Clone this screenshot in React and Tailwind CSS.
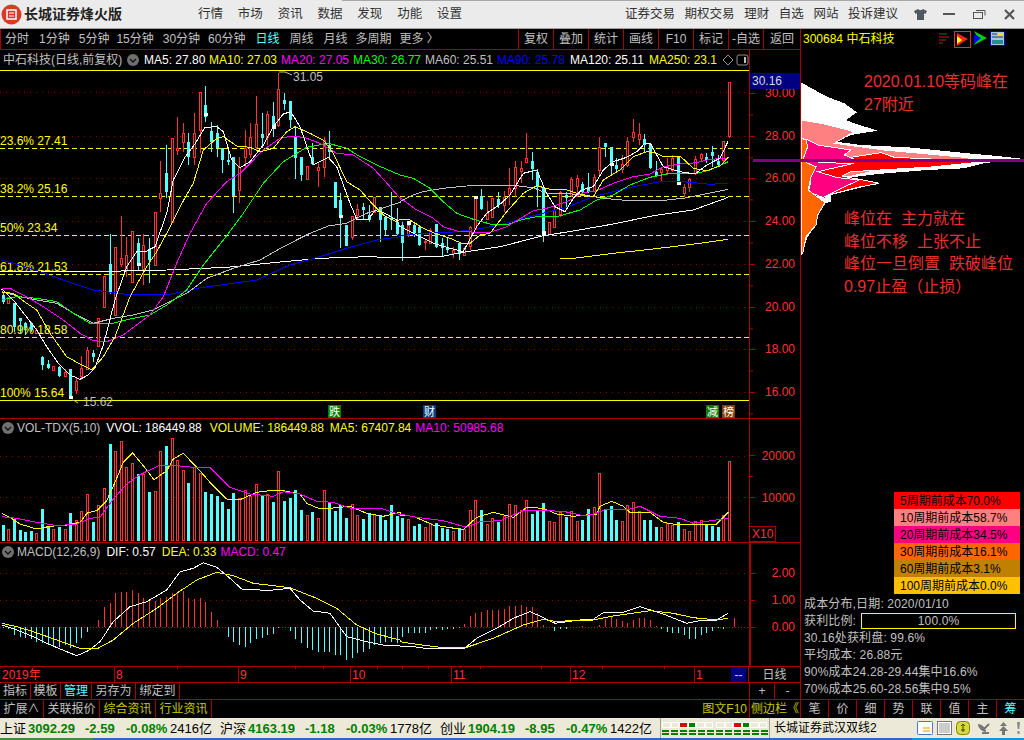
import React from 'react';

const RED = '#ff3232';
const CYAN = '#54ffff';
const stepX = (i) => Math.round((8 + 16.886 * i) / 3);

// all chart numbers are read off 3x crops, so they stay in that scale here
const toPts = (left, right, dy = 0) => {
  const out = [];
  for (let i = 0; i < left.length; i += 2) out.push(`${(left[i] / 3).toFixed(1)},${(left[i + 1] / 3 + dy).toFixed(1)}`);
  for (let i = 0; i < right.length; i += 2) out.push(`${((right[i] + 1200) / 3).toFixed(1)},${(right[i + 1] / 3 + dy).toFixed(1)}`);
  return out.join(' ');
};

// [kind, bodyTop, bodyBottom, high, low]
const candles = [
  ['c',675,695,670,703],['r',680,697,680,697],['c',698,770,698,785],['c',745,755,745,790],['c',760,775,755,795],['c',760,780,755,785],['r',780,790,775,792],
  ['c',862,885,858,900],['c',882,893,870,897],['r',888,899,888,899],['c',890,918,888,920],['r',905,917,898,920],['c',897,985,897,985],['r',932,960,925,972],
  ['r',895,920,858,930],['r',840,897,830,900],['c',850,862,840,875],['r',745,830,745,830],['r',618,712,618,712],['c',583,668,492,672],['r',532,735,532,735],
  ['r',565,582,438,590],['r',555,600,500,620],['r',484,637,484,637],['c',520,590,505,600],['r',525,597,492,645],['c',540,570,505,640],['r',427,585,427,585],
  ['r',370,385,273,425],['c',310,368,225,385],['r',205,458,205,458],['r',235,240,142,255],['r',190,217,158,245],['c',215,260,190,285],['r',190,262,130,285],
  ['r',67,180,67,250],['c',105,140,48,155],['c',183,217,155,245],['c',188,232,165,262],['c',235,272,235,310],['c',270,275,235,285],['c',262,378,262,430],
  ['r',290,360,262,400],['r',235,262,180,295],['r',200,250,158,265],['r',162,232,78,240],['c',192,205,130,235],['r',132,200,122,225],['c',138,178,95,200],
  ['r',58,165,8,170],['c',90,102,68,120],['c',93,150,93,175],['c',198,265,170,328],['c',260,315,260,333],['r',288,326,288,326],['c',262,282,220,285],
  ['r',290,300,275,350],['r',210,290,200,322],['c',225,245,182,270],['c',335,413,335,413],['c',390,445,370,535],['c',465,527,465,527],['r',438,502,438,510],
  ['r',418,435,403,450],['c',410,420,400,450],['c',435,450,405,455],['r',380,425,380,430],['c',412,450,410,515],['c',440,480,440,495],['c',445,452,367,480],
  ['c',455,490,415,495],
  ['c',465,520,455,572],['r',465,495,453,500],['c',465,495,460,500],['c',472,525,472,528],['r',512,516,510,540],['r',480,518,475,520],['c',462,532,462,535],
  ['c',518,532,505,560],['c',530,540,505,548],['r',540,548,530,565],['c',520,552,518,570],['r',535,556,530,558],['r',472,530,468,540],['r',380,475,378,478],
  ['c',378,418,358,420],['r',428,445,392,450],['r',385,443,385,445],['c',388,405,365,415],['r',380,403,362,425],['r',353,370,293,405],['r',292,355,272,380],
  ['r',295,303,272,340],['r',265,276,188,278],['c',273,298,245,330],['c',305,350,298,412],['c',350,495,350,515],['r',457,492,457,495],['r',420,470,405,472],
  ['r',365,430,362,440],['c',375,385,365,420],['r',327,375,320,380],['r',325,350,315,380],['c',342,365,335,368],['c',350,365,310,368],['r',320,362,312,365],
  ['r',232,302,200,320],['c',220,232,220,260],['c',232,290,232,315],['c',285,298,265,310],['r',282,298,255,310],['r',212,285,202,290],['r',186,200,148,215],
  ['r',192,207,160,225],['c',208,225,192,245],['c',222,295,218,298],['c',305,318,272,320],['r',298,308,290,335],['r',288,300,265,315],['r',265,302,255,305],
  ['c',258,335,258,345],['r',350,368,342,380],['r',328,352,325,365],['r',268,310,258,315],['r',252,264,250,272],['c',262,270,248,280],['c',245,258,228,290],
  ['c',272,285,255,290],['r',212,268,212,280],['r',37,200,37,205],
];
// the small white doji caps
const whiteCaps = [[12,978,985],[24,580,590],[36,130,140],[48,165,178],[60,435,445],[72,453,465],[84,378,388],[96,483,495],[108,280,290],[120,335,345]];

const ma5 = [[5,657,40,690,75,735,110,780,140,830,175,880,210,915,240,928,265,915,285,893,310,825,345,690,380,590,410,545,440,543,465,530,500,430,520,330,555,262,585,222,615,172,650,170,670,185,695,270,720,293,750,275,790,225,820,170,850,132,872,125,900,170,940,285,985,262,1010,290,1050,400,1070,447,1105,447,1125,422,1145,425,1190,450],
  [0,470,40,490,100,520,150,535,190,545,230,470,260,430,300,403,330,375,370,310,410,300,440,370,465,410,495,425,520,385,545,360,580,350,610,300,640,275,680,262,710,245,735,220,752,222,790,290,840,305,885,312,920,285,960,265,985,212]];
const ma10 = [[5,667,40,670,80,700,110,720,150,790,200,860,245,885,275,900,310,860,345,800,390,680,440,590,470,545,500,490,540,410,580,340,610,240,650,205,670,200,710,228,750,232,780,245,820,235,860,185,885,170,930,190,970,210,1000,250,1040,335,1080,360,1120,405,1150,435,1190,455],
  [0,448,30,450,70,475,110,492,150,505,190,522,210,520,240,495,270,490,320,425,370,370,410,347,450,358,500,360,530,370,580,380,610,330,660,300,700,260,740,245,770,250,790,260,840,258,880,295,920,302,960,288,985,262]];
const ma20 = [[5,655,30,655,80,680,130,710,190,750,240,790,280,812,320,815,370,795,450,735,490,680,530,580,570,490,620,400,680,335,720,310,790,240,840,205,880,198,915,203,960,220,1010,250,1060,255,1120,295,1170,350,1200,385],
  [0,383,50,420,100,445,130,470,170,483,230,487,270,487,320,470,370,440,400,422,440,415,500,395,550,368,590,362,640,340,700,320,750,312,790,290,840,282,890,278,930,268,985,265]];
const ma30 = [[5,690,50,680,110,685,170,695,220,730,270,760,330,762,400,745,450,735,500,705,560,660,610,585,670,510,730,430,790,340,850,275,920,232,985,220,1040,235,1080,260,1130,285,1200,315],
  [0,315,40,325,90,355,130,395,170,430,220,448,270,462,320,465,370,448,410,440,470,440,540,420,590,390,640,375,690,345,750,322,810,310,880,312,930,300,985,275]];
const ma60 = [[5,665,60,680,110,690,170,700,230,735,280,760,340,745,400,735,460,720,510,695,560,670,620,625,700,595,780,570,850,530,930,490,985,468,1040,460,1100,430,1200,397],
  [0,395,40,375,70,365,130,355,230,345,330,345,400,353,440,370,500,370,580,380,640,388,700,393,780,392,850,385,900,375,985,358]];
const ma90 = [[5,570,60,585,120,605,190,630,280,660,380,673,510,673,590,655,700,640,770,630,870,585,960,560,1040,535,1130,510,1200,500],
  [0,498,60,490,150,487,230,478,300,465,370,445,430,430,500,412,580,380,640,365,700,350,780,335,850,335,930,343,985,340]];
const ma120 = [[0,603,260,603,270,605,500,600,680,592,850,575,960,565,1100,560,1200,563],
  [0,562,120,560,200,545,300,530,430,497,520,483,640,462,760,437,880,420,985,382]];
const ma250 = [[], [480,565,520,565,640,550,760,537,900,520,985,508]];

const volBars = [
  348,360,330,363,370,366,372,300,350,360,355,360,312,333,305,255,338,288,237,105,125,97,175,163,195,195,248,245,125,110,87,153,183,222,175,192,248,255,260,278,300,252,268,243,260,225,262,255,278,185,275,268,242,302,318,308,327,243,282,305,287,327,285,318,330,315,315,318,332,288,320,
  327,330,350,345,355,343,342,357,360,365,358,360,303,273,303,345,327,338,322,285,288,303,273,315,302,282,337,340,308,323,307,335,333,300,295,192,303,292,333,337,288,280,306,333,333,354,355,342,348,340,360,367,337,334,348,350,354,318,157,
];
const volMa5 = [[5,313,30,325,60,345,110,360,150,352,200,348,240,340,262,312,290,305,320,275,345,220,370,160,398,132,430,170,462,212,500,185,520,150,550,133,590,175,630,220,680,270,720,272,770,250,810,245,840,243,900,255,920,283,960,300,1000,297,1050,292,1100,313,1150,322,1200,310],
  [0,318,40,322,100,348,190,362,230,325,280,310,340,325,380,295,430,298,470,315,520,322,590,315,600,292,635,277,670,292,690,310,750,310,790,340,830,347,900,348,950,345,985,310]];
const volMa10 = [[5,323,50,328,110,340,170,350,230,345,270,328,300,325,340,270,380,225,420,197,480,168,530,170,580,175,630,175,690,235,750,255,820,262,850,248,900,255,950,277,1000,280,1050,297,1150,300,1200,317],
  [0,315,50,325,130,335,200,355,240,338,300,335,370,305,440,305,490,307,550,320,580,316,620,300,680,303,720,292,780,322,840,328,880,343,985,328]];

const macdBars = [
  655,658,675,680,685,688,695,700,705,708,710,705,715,700,685,665,652,630,592,578,548,545,545,540,548,563,570,572,565,562,550,545,542,565,568,565,575,605,630,652,680,695,705,710,698,688,685,675,672,655,652,662,688,700,715,720,725,725,725,735,735,750,745,730,725,718,705,700,695,695,700,
  682,670,668,670,668,660,658,660,657,658,655,642,618,609,606,600,600,600,598,588,588,585,590,592,608,645,652,662,658,656,652,650,648,650,652,645,628,622,628,633,640,630,624,625,630,648,658,665,668,670,675,688,688,675,668,662,655,658,652,625,
];
const dif = [[5,645,50,660,100,680,140,700,200,725,230,737,265,722,300,695,340,635,390,590,440,575,500,540,540,485,580,475,610,458,650,472,690,505,725,537,780,540,820,540,870,535,900,570,940,603,990,610,1040,680,1100,695,1150,705,1200,708],
  [0,708,40,710,70,714,195,714,230,685,290,655,340,625,390,605,420,618,465,640,540,630,580,628,610,608,670,607,720,590,790,612,860,640,910,630,950,630,985,610]];
const dea = [[5,640,50,650,100,665,170,690,240,715,290,717,340,690,400,640,470,595,530,550,590,510,650,487,700,497,760,520,870,533,950,565,1010,595,1070,645,1130,672,1200,690],
  [0,695,50,703,130,713,200,712,280,685,370,645,430,628,470,635,530,630,580,630,640,618,750,602,820,610,880,623,950,630,985,625]];

const chipWhite = [150,37,200,65,240,85,280,100,318,127,285,150,310,160,380,182,300,195,255,215,330,225,470,232,650,250,740,258,820,267,760,272,700,280,640,295,530,300,380,312,280,325,325,328,385,340,320,355,240,375,240,395,220,400,200,440,195,465,170,500,160,530,150,556];
const chipPink = [150,150,210,160,310,185,250,220,400,240,640,262,700,272,640,282,540,290,380,300,280,323,200,310,150,275];
const chipRed = [390,248,430,262,650,272,670,278,540,291,300,305,272,318,325,328,385,340,320,352,222,378,240,395,175,370,175,330,150,290,160,250,300,262];
const chipHot = [150,205,172,210,200,225,300,240,280,255,310,268,200,278,310,280,200,305,260,323,325,330,270,355,222,380,240,392,172,365,180,335,150,280];
const chipOrange = [150,205,165,210,170,230,155,270,170,280,195,290,180,320,172,360,222,398,200,435,195,465,165,500,155,550,150,556];
const chipPts = (a) => {
  const out = [];
  for (let i = 0; i < a.length; i += 2) out.push(`${(a[i] / 3 - 50).toFixed(1)},${(a[i + 1] / 3).toFixed(1)}`);
  return out.join(' ');
};

const fibLevels = [
  ['23.6% 27.41', 213, 235], ['38.2% 25.16', 357, 379], ['50% 23.34', 474, 496],
  ['61.8% 21.53', 591, 613], ['80.9% 18.58', 780, 802], ['100% 15.64', 968, null],
];
const gridZ = [67, 197, 325, 454, 583, 712, 838, 967];
const priceLabels = ['30.00', '28.00', '26.00', '24.00', '22.00', '20.00', '18.00', '16.00'];
const dateTicks = [177, 295, 323, 377, 402, 428, 480, 541, 602, 664];

function MainChart() {
  return (
    <svg width="800" height="349" className="block">
      {gridZ.map((z) => (
        <line key={z} x1="0" x2="749" y1={Math.round(z / 3) + 0.5} y2={Math.round(z / 3) + 0.5} stroke="#900000" strokeDasharray="1 5" shapeRendering="crispEdges" />
      ))}
      <line x1="0" x2="749" y1="0.5" y2="0.5" stroke="#ffff00" />
      <line x1="0" x2="749" y1="330.5" y2="330.5" stroke="#ffff00" />
      {fibLevels.map(([label, textZ, lineZ]) => (
        <g key={label}>
          {lineZ && <line x1="0" x2="749" y1={Math.round(lineZ / 3) + 0.5} y2={Math.round(lineZ / 3) + 0.5} stroke="#ffff00" strokeDasharray="5 3" />}
          <text x="0" y={textZ / 3 + 4} fill="#ffff00">{label}</text>
        </g>
      ))}
      {candles.map(([kind, top, bot, hi, lo], i) => {
        const x = stepX(i);
        const color = kind === 'r' ? RED : CYAN;
        return (
          <g key={i} shapeRendering="crispEdges">
            <line x1={x + 0.5} x2={x + 0.5} y1={Math.round(hi / 3)} y2={Math.round(lo / 3)} stroke={color} />
            {kind === 'r' ? (
              <rect x={x - 0.5} y={Math.round(top / 3) + 0.5} width="2" height={Math.max(1, Math.round((bot - top) / 3))} fill="#000" stroke={color} />
            ) : (
              <rect x={x - 1} y={Math.round(top / 3)} width="3" height={Math.max(1, Math.round((bot - top) / 3))} fill={color} />
            )}
          </g>
        );
      })}
      {whiteCaps.map(([i, a, b]) => (
        <rect key={i} x={stepX(i) - 1} y={Math.round(a / 3)} width="4" height={Math.round((b - a) / 3)} fill="#fff" shapeRendering="crispEdges" />
      ))}
      <rect x={stepX(12) - 1} y="326" width="4" height="3" fill="#fff" />
      <g fill="none" strokeWidth="1" shapeRendering="crispEdges">
        <polyline points={toPts(...ma120)} stroke="#ffffff" />
        <polyline points={toPts(...ma90)} stroke="#0000ff" />
        <polyline points={toPts(...ma60)} stroke="#c0c0c0" />
        <polyline points={toPts(...ma30)} stroke="#00ff00" />
        <polyline points={toPts(...ma20)} stroke="#ff00ff" />
        <polyline points={toPts(...ma10)} stroke="#ffff00" />
        <polyline points={toPts(...ma5)} stroke="#ffffff" />
        <polyline points={toPts(...ma250)} stroke="#ffff00" />
      </g>
      <polyline points="279,2 285,2 292,5" fill="none" stroke="#c0c0c0" />
      <text x="293" y="11" fill="#c0c0c0">31.05</text>
      <polyline points="72,330 75,331 78,333" fill="none" stroke="#c0c0c0" />
      <text x="83" y="336" fill="#c0c0c0">15.62</text>
      {/* event marks along the bottom */}
      <g textAnchor="middle" className="text-[11px]">
        <rect x="328" y="335" width="13" height="13" fill="#008000" />
        <text x="334.5" y="346" fill="#fff">跌</text>
        <rect x="423" y="335" width="13" height="13" fill="#004080" />
        <text x="429.5" y="346" fill="#fff">财</text>
        <rect x="706" y="335" width="13" height="13" fill="#008000" />
        <text x="712.5" y="346" fill="#fff">减</text>
        <rect x="722" y="335" width="13" height="13" fill="#804000" />
        <text x="728.5" y="346" fill="#fff">榜</text>
      </g>
      {/* price axis */}
      <line x1="749.5" x2="749.5" y1="0" y2="349" stroke="#a80000" />
      {priceLabels.map((p, i) => {
        const y = Math.round(22.7 + i * 42.8);
        return (
          <g key={p}>
            <line x1="749" x2="755" y1={y + 0.5} y2={y + 0.5} stroke="#a80000" />
            <line x1="749" x2="753" y1={y + 21.9} y2={y + 21.9} stroke="#a80000" />
            <text x="795" y={y + 4} fill={RED} textAnchor="end">{p}</text>
          </g>
        );
      })}
      <rect x="750" y="3" width="50" height="16" fill="#000080" />
      <text x="752" y="15" fill="#d8d8d8">30.16</text>
      <line x1="753" x2="800" y1="90.5" y2="90.5" stroke="#800080" strokeWidth="3" />
    </svg>
  );
}

function VolChart() {
  const dy = -10;
  return (
    <div className="relative h-[123px]">
      <svg width="800" height="123" className="block">
        {[140, 265].map((z) => (
          <line key={z} x1="0" x2="749" y1={Math.round(z / 3 + dy) + 0.5} y2={Math.round(z / 3 + dy) + 0.5} stroke="#900000" strokeDasharray="1 5" shapeRendering="crispEdges" />
        ))}
        <g shapeRendering="crispEdges">
          {candles.map(([kind], i) => {
            const x = stepX(i);
            const top = Math.round(volBars[i] / 3 + dy);
            const h = 121 - top;
            return kind === 'r' ? (
              <rect key={i} x={x - 0.5} y={top + 0.5} width="2" height={h} fill="#000" stroke={RED} />
            ) : (
              <rect key={i} x={x - 1} y={top} width="3" height={h + 1} fill={CYAN} />
            );
          })}
        </g>
        <g fill="none" shapeRendering="crispEdges">
          <polyline points={toPts(...volMa5, dy)} stroke="#ffff00" />
          <polyline points={toPts(...volMa10, dy)} stroke="#ff00ff" />
        </g>
        <line x1="749.5" x2="749.5" y1="0" y2="123" stroke="#a80000" />
        <text x="795" y="41" fill={RED} textAnchor="end">20000</text>
        <text x="795" y="83" fill={RED} textAnchor="end">10000</text>
        <line x1="749" x2="755" y1="36.5" y2="36.5" stroke="#a80000" />
        <line x1="749" x2="753" y1="57.5" y2="57.5" stroke="#a80000" />
        <line x1="749" x2="755" y1="78.5" y2="78.5" stroke="#a80000" />
        <rect x="749.5" y="107.5" width="26" height="15" fill="none" stroke="#a80000" />
        <text x="752" y="119" fill={RED}>X10</text>
      </svg>
      <div className="absolute left-0 top-0 flex h-[17px] items-center whitespace-nowrap pl-[2px]">
        <DropDot />
        <span className="ml-[3px] text-[#c0c0c0]">VOL-TDX(5,10)</span>
        <span className="ml-[6px] text-white">VVOL: 186449.88</span>
        <span className="ml-[8px] text-[#ffff00]">VOLUME: 186449.88</span>
        <span className="ml-[6px] text-[#ffff00]">MA5: 67407.84</span>
        <span className="ml-[4px] text-[#ff00ff]">MA10: 50985.68</span>
      </div>
    </div>
  );
}

function MacdChart() {
  const dy = -133;
  const zero = Math.round(652 / 3 + dy);
  return (
    <div className="relative h-[123px]">
      <svg width="800" height="123" className="block">
        {[490, 571].map((z) => (
          <line key={z} x1="0" x2="749" y1={Math.round(z / 3 + dy) + 0.5} y2={Math.round(z / 3 + dy) + 0.5} stroke="#900000" strokeDasharray="1 5" shapeRendering="crispEdges" />
        ))}
        <line x1="0" x2="749" y1={zero + 0.5} y2={zero + 0.5} stroke="#c00000" strokeDasharray="1 2" shapeRendering="crispEdges" />
        <g shapeRendering="crispEdges">
          {macdBars.map((z, i) => {
            const y = Math.round(z / 3 + dy);
            const x = stepX(i) + 0.5;
            return <line key={i} x1={x} x2={x} y1={zero} y2={y} stroke={z < 652 ? RED : CYAN} />;
          })}
        </g>
        <g fill="none" shapeRendering="crispEdges">
          <polyline points={toPts(...dif, dy)} stroke="#ffffff" />
          <polyline points={toPts(...dea, dy)} stroke="#ffff00" />
        </g>
        <line x1="750" x2="750" y1="0" y2="123" stroke="#a80000" strokeWidth="2" />
        {[['2.00', 490], ['1.00', 571], ['0.00', 652]].map(([t, z]) => (
          <g key={t}>
            <line x1="750" x2="755" y1={Math.round(z / 3 + dy) + 0.5} y2={Math.round(z / 3 + dy) + 0.5} stroke="#a80000" />
            <text x="795" y={z / 3 + dy + 4} fill={RED} textAnchor="end">{t}</text>
          </g>
        ))}
      </svg>
      <div className="absolute left-0 top-0 flex h-[17px] items-center whitespace-nowrap pl-[2px]">
        <DropDot />
        <span className="ml-[3px] text-[#c0c0c0]">MACD(12,26,9)</span>
        <span className="ml-[6px] text-white">DIF: 0.57</span>
        <span className="ml-[6px] text-[#ffff00]">DEA: 0.33</span>
        <span className="ml-[4px] text-[#ff00ff]">MACD: 0.47</span>
      </div>
    </div>
  );
}

function DropDot() {
  return (
    <svg width="12" height="12" viewBox="0 0 12 12" className="shrink-0">
      <circle cx="6" cy="6" r="6" fill="#707070" />
      <path d="M3 5l3 3 3-3" fill="none" stroke="#111" strokeWidth="1.4" />
    </svg>
  );
}

function ChipChart() {
  return (
    <div className="relative h-[422px]">
      <svg width="224" height="422" className="block" shapeRendering="crispEdges">
        <polygon points={chipPts(chipWhite)} fill="#ffffff" />
        <polygon points={chipPts(chipPink)} fill="#ff8080" stroke="#fff" />
        <polygon points={chipPts(chipRed)} fill="#ff0000" stroke="#fff" />
        <polygon points={chipPts(chipHot)} fill="#ff0080" stroke="#fff" />
        <polygon points={chipPts(chipOrange)} fill="#ff6600" stroke="#fff" />
        <line x1="0" x2="224" y1="90.5" y2="90.5" stroke="#800080" strokeWidth="3" />
      </svg>
      <div className="absolute left-[63px] top-0 text-[16px] leading-[23px] text-[#e83030]">
        <p>2020.01.10等码峰在</p>
        <p>27附近</p>
      </div>
      <div className="absolute left-[43px] top-[138px] whitespace-pre text-[16px] leading-[22.5px] text-[#e83030]">
        <p>峰位在  主力就在</p>
        <p>峰位不移  上张不止</p>
        <p>峰位一旦倒置  跌破峰位</p>
        <p>0.97止盈（止损）</p>
      </div>
    </div>
  );
}

const costRows = [
  ['5周期前成本70.0%', 'bg-[#ff0000]'],
  ['10周期前成本58.7%', 'bg-[#ff8080]'],
  ['20周期前成本34.5%', 'bg-[#ff0080]'],
  ['30周期前成本16.1%', 'bg-[#ff6600]'],
  ['60周期前成本3.1%', 'bg-[#c08000]'],
  ['100周期前成本0.0%', 'bg-[#ffc000]'],
];

function Tab({ children, className = '' }) {
  return <div className={`flex h-full items-center justify-center border-r border-[#a80000] ${className}`}>{children}</div>;
}

function WindowIcons() {
  return (
    <div className="flex items-center">
      <svg width="13" height="13" viewBox="0 0 13 13"><path d="M4 1L0 3l1.5 3L3 5.300V12h7V5.300L11.500 6 13 3 9 1c-1 1.500-4 1.500-5 0z" fill="#4f5a60" /></svg>
      <svg width="13" height="13" viewBox="0 0 13 13" className="ml-[16px]"><rect x="0" y="5" width="12" height="2" fill="#555" /></svg>
      <svg width="13" height="13" viewBox="0 0 13 13" className="ml-[17px]"><rect x="0.500" y="4.500" width="9" height="6" fill="none" stroke="#555" /><path d="M3 2.500h9v5" fill="none" stroke="#555" /></svg>
      <svg width="13" height="13" viewBox="0 0 13 13" className="ml-[17px]"><path d="M2 2l9 9M11 2l-9 9" stroke="#555" strokeWidth="2.200" /></svg>
    </div>
  );
}

function HeaderIcons() {
  return (
    <div className="absolute left-[137px] top-[2px] flex items-start gap-[2px]">
      <svg width="14" height="16" viewBox="0 0 14 16">
        <path d="M1 3h2M1 6h10M1 9h7M1 12h2" stroke="#c02020" />
        <path d="M3 3h6M3 12h2" stroke="#008000" />
      </svg>
      <svg width="18" height="17" viewBox="0 0 18 17">
        <rect x="0.500" y="0.500" width="16" height="16" fill="#000" stroke="#e03030" />
        <path d="M3 2l11 6-11 7z" fill="#ff2020" />
        <path d="M3 5l5 4-5 4z" fill="#ffff00" />
      </svg>
      <svg width="14" height="16" viewBox="0 0 14 16">
        <path d="M0 0l13 7-13 7 4-7z" fill="#00d000" />
        <path d="M0 3l7 4-7 6z" fill="#0000ff" />
      </svg>
      <svg width="15" height="15" viewBox="0 0 15 15">
        <rect x="0.500" y="0.500" width="14" height="14" fill="#a0c8e0" stroke="#0000c0" />
        <rect x="8" y="2" width="5" height="3" fill="#ffe000" />
        <rect x="2" y="9" width="11" height="4" fill="#209090" />
        <path d="M2 3h5M2 6h11" stroke="#303060" />
      </svg>
    </div>
  );
}

function StatusIcons() {
  return (
    <div className="ml-auto mr-[3px] flex items-center gap-[4px]">
      <svg width="16" height="14" viewBox="0 0 16 14"><rect x="0.500" y="0.500" width="15" height="13" rx="1" fill="#fff" stroke="#4a78c0" /><path d="M6 7h7M6 10h7" stroke="#c8a000" /></svg>
      <svg width="15" height="14" viewBox="0 0 15 14"><rect x="0.500" y="0.500" width="14" height="13" fill="#fff" stroke="#777" /><path d="M2 3h11M2 5h11M2 7h11M2 9h11M2 11h11" stroke="#999" /></svg>
      <svg width="14" height="14" viewBox="0 0 14 14"><rect x="0.500" y="0.500" width="13" height="13" rx="4" fill="#d8d840" stroke="#808000" /><path d="M7 3v8M5 5l2-2 2 2M5 9h4" stroke="#404000" fill="none" /></svg>
      <svg width="15" height="14" viewBox="0 0 15 14" className="ml-[3px]"><path d="M1 3c4 0 8 4 8 8-4 0-8-4-8-8z" fill="#777" /><path d="M7 8l5-5M5 12h7" stroke="#777" strokeWidth="2" /></svg>
      <svg width="11" height="14" viewBox="0 0 11 14" className="ml-[2px]"><path d="M5.500 1L9 5H2zM5.500 5L10 10H1zM4 10h3v4H4z" fill="#777" /></svg>
      <svg width="5" height="14" viewBox="0 0 5 14" className="ml-[3px]"><path d="M1 1h3l-.7 7H1.700zM1.500 10h2v3h-2z" fill="#888" /></svg>
    </div>
  );
}

function MiniBoard() {
  const cells = ['bg-[#ece9d8]', 'bg-[#ece9d8]', 'bg-[#e00000]', 'bg-[#008000]', 'bg-[#ece9d8]', 'bg-[#ece9d8]'];
  return (
    <div className="flex flex-col gap-[2px]">
      <div className="flex">
        {cells.map((c, i) => <div key={i} className={`h-[6px] w-[8.500px] border border-[#fff] ${c}`} />)}
      </div>
      <div className="flex gap-[2px]">
        {[0, 1, 2, 3, 4, 5].map((i) => (
          <div key={i} className="flex flex-col gap-[1px]">
            <div className="h-[2px] w-[7px] bg-[#008000]" />
            <div className="h-[2px] w-[7px] bg-[#008000]" />
          </div>
        ))}
      </div>
    </div>
  );
}

function IndexItem({ name, point, change, percent, amount }) {
  return (
    <div className="flex w-[220px] shrink-0 items-center whitespace-nowrap">
      <span className="w-[28px] text-[13px] text-black">{name}</span>
      <span className="w-[57px] font-bold text-[#008000]">{point}</span>
      <span className="w-[41px] font-bold text-[#008000]">{change}</span>
      <span className="w-[44px] font-bold text-[#008000]">{percent}</span>
      <span className="text-black">{amount}</span>
    </div>
  );
}

export default function App() {
  return (
    <div className="flex h-[740px] w-[1024px] flex-col overflow-hidden bg-black font-['Liberation_Sans','Noto_Sans_CJK_SC',sans-serif] text-[12px] leading-none text-[#c0c0c0]">
      {/* title bar */}
      <div className="relative flex h-[29px] shrink-0 items-center whitespace-nowrap border-b border-[#a0a0a0] bg-[#ebebeb] text-[12.500px] text-[#333]">
        <div className="absolute right-0 top-0 left-[342px] h-px bg-[#a8a8a8]" />
        <svg width="21" height="21" viewBox="0 0 21 21" className="ml-[1px] shrink-0">
          <circle cx="10.500" cy="10.500" r="10" fill="#d93a28" />
          <rect x="6" y="6" width="9" height="9" fill="none" stroke="#fff" strokeWidth="1.500" />
          <path d="M8 9h5M8 12h5" stroke="#fff" />
        </svg>
        <span className="ml-[2px] w-[100px] shrink-0 text-[14px] font-bold text-[#222]">长城证券烽火版</span>
        <div className="ml-[74px] flex w-[264px] shrink-0 justify-between">
          {['行情', '市场', '资讯', '数据', '发现', '功能', '设置'].map((m) => <span key={m}>{m}</span>)}
        </div>
        <div className="ml-[163px] flex w-[273px] shrink-0 justify-between">
          {['证券交易', '期权交易', '理财', '自选', '网站', '投诉建议'].map((m) => <span key={m}>{m}</span>)}
        </div>
        <div className="ml-[16px]"><WindowIcons /></div>
      </div>

      <div className="flex min-h-0 flex-1">
        {/* left: charts */}
        <div className="flex w-[800px] shrink-0 flex-col">
          <div className="flex h-[21px] shrink-0 items-center border-b border-l border-[#a80000] pl-[4px]">
            <div className="flex items-center whitespace-nowrap">
              <span>分时</span>
              <span className="ml-[10px]">1分钟</span>
              <span className="ml-[9px]">5分钟</span>
              <span className="ml-[7px]">15分钟</span>
              <span className="ml-[9px]">30分钟</span>
              <span className="ml-[8px]">60分钟</span>
              <span className="ml-[10px] text-[#54ffff]">日线</span>
              <span className="ml-[10px]">周线</span>
              <span className="ml-[10px]">月线</span>
              <span className="ml-[8px]">多周期</span>
              <span className="ml-[8px]">更多 〉</span>
            </div>
            <div className="ml-auto flex h-full">
              {['复权', '叠加', '统计', '画线', 'F10', '标记', '-自选', '返回'].map((t, i) => (
                <div key={t} className={`flex h-full items-center justify-center border-l border-[#a80000] ${i === 7 ? 'w-[37px]' : 'w-[35px]'}`}>{t}</div>
              ))}
            </div>
          </div>
          <div className="flex h-[20px] shrink-0 items-center whitespace-nowrap pl-[3px]">
            <span className="w-[124px]">中石科技(日线,前复权)</span>
            <DropDot />
            <span className="ml-[5px] w-[65px] text-white">MA5: 27.80</span>
            <span className="w-[72px] text-[#ffff00]">MA10: 27.03</span>
            <span className="w-[72px] text-[#ff00ff]">MA20: 27.05</span>
            <span className="w-[72px] text-[#00ff00]">MA30: 26.77</span>
            <span className="w-[72px] text-[#c0c0c0]">MA60: 25.51</span>
            <span className="w-[73px] text-[#0000ff]">MA90: 25.78</span>
            <span className="w-[79px] text-white">MA120: 25.11</span>
            <span className="w-[73px] text-[#ffff00]">MA250: 23.1</span>
            <svg width="12" height="12" viewBox="0 0 12 12" className="shrink-0"><path d="M6 1l5 5-5 5-5-5z" fill="none" stroke="#909090" /></svg>
            <svg width="13" height="12" viewBox="0 0 13 12" className="ml-[2px] shrink-0"><rect x="1" y="1" width="11" height="10" rx="2" fill="none" stroke="#909090" /><rect x="8" y="3" width="2" height="6" fill="#c0c0c0" /></svg>
            <div className="ml-auto h-full w-[51px] border-l border-[#a80000]" />
          </div>
          <MainChart />
          <div className="border-t border-[#a80000]"><VolChart /></div>
          <div className="border-t border-[#a80000]"><MacdChart /></div>

          <div className="relative flex h-[16px] shrink-0 border-t border-[#a80000] text-[#ff3232]">
            <div className="flex h-full w-[115px] items-center border-r border-[#a80000] pl-[2px]">2019年</div>
            <div className="flex h-full w-[124px] items-center border-r border-[#a80000] pl-[1px]">8</div>
            <div className="flex h-full w-[112px] items-center border-r border-[#a80000] pl-[1px]">9</div>
            <div className="flex h-full w-[101px] items-center border-r border-[#a80000] pl-[1px]">10</div>
            <div className="flex h-full w-[119px] items-center border-r border-[#a80000] pl-[1px]">11</div>
            <div className="flex h-full w-[124px] items-center border-r border-[#a80000] pl-[1px]">12</div>
            <div className="flex h-full w-[36px] items-center pl-[1px]">1</div>
            <div className="flex h-full w-[15px] items-center justify-center bg-[#000080] text-[#d0d0d0]">--</div>
            <div className="flex h-full w-[3px] border-r border-[#a80000]" />
            <div className="flex h-full flex-1 items-center justify-center text-[#c0c0c0]">日线</div>
            {dateTicks.map((x) => (
              <div key={x} style={{ left: x }} className="absolute top-0 h-[2px] w-px bg-[#a80000]" />
            ))}
          </div>
          <div className="flex h-[17px] shrink-0 border-t border-[#a80000]">
            <Tab className="w-[31px]">指标</Tab>
            <Tab className="w-[30px]">模板</Tab>
            <Tab className="w-[31px] text-[#54ffff]">管理</Tab>
            <Tab className="w-[44px]">另存为</Tab>
            <Tab className="w-[44px]">绑定到</Tab>
            <div className="ml-auto flex h-full w-[51px] border-l border-[#a80000]">
              <div className="flex w-[25px] items-center justify-center border-r border-[#a80000]">+</div>
              <div className="flex flex-1 items-center justify-center">-</div>
            </div>
          </div>
          <div className="flex h-[19px] shrink-0 border-t border-[#a80000]">
            <Tab className="w-[44px]">扩展∧</Tab>
            <Tab className="w-[56px]">关联报价</Tab>
            <Tab className="w-[56px] text-[#c8c800]">综合资讯</Tab>
            <Tab className="w-[56px] text-[#c8c800]">行业资讯</Tab>
            <div className="ml-auto flex h-full items-center whitespace-nowrap text-[#c8c800]">
              <span className="pr-[2px]">图文F10</span>
              <span className="flex h-full w-[51px] items-center justify-center border-l border-[#a80000]">侧边栏《</span>
            </div>
          </div>
        </div>

        {/* right: chip distribution */}
        <div className="flex w-[224px] shrink-0 flex-col border-l border-[#a80000]">
          <div className="relative flex h-[41px] shrink-0 pl-[2px] pt-[4px] text-[#ffff00]">
            300684 中石科技
            <HeaderIcons />
          </div>
          <ChipChart />
          <div className="ml-[93px] w-[126px] shrink-0 text-black">
            {costRows.map(([t, c]) => (
              <div key={t} className={`flex h-[17px] items-center whitespace-nowrap pl-[6px] ${c}`}>{t}</div>
            ))}
          </div>
          <div className="flex h-[105px] shrink-0 flex-col justify-between pb-[2px] pl-[3px] pt-[2px] tracking-[0.15px] text-[#c0c0c0]">
            <div className="flex h-[16px] items-center">成本分布,日期: 2020/01/10</div>
            <div className="flex h-[16px] items-center">
              获利比例:
              <div className="ml-[5px] flex h-[16px] w-[155px] items-center justify-center border border-[#ffff00]">100.0%</div>
            </div>
            <div className="flex h-[16px] items-center">30.16处获利盘: 99.6%</div>
            <div className="flex h-[16px] items-center">平均成本: 26.88元</div>
            <div className="flex h-[16px] items-center">90%成本24.28-29.44集中16.6%</div>
            <div className="flex h-[16px] items-center">70%成本25.60-28.56集中9.5%</div>
          </div>
          <div className="flex h-[19px] shrink-0 border-t border-[#a80000]">
            {['笔', '价', '细', '势', '联', '值', '主'].map((t) => <Tab key={t} className="flex-1">{t}</Tab>)}
            <div className="flex flex-1 items-center justify-center text-[#54ffff]">筹</div>
          </div>
        </div>
      </div>

      {/* status bar */}
      <div className="flex h-[20px] shrink-0 items-center bg-[#ece9d8] text-[13px]">
        <IndexItem name="上证" point="3092.29" change="-2.59" percent="-0.08%" amount="2416亿" />
        <IndexItem name="沪深" point="4163.19" change="-1.18" percent="-0.03%" amount="1778亿" />
        <IndexItem name="创业" point="1904.19" change="-8.95" percent="-0.47%" amount="1422亿" />
        <div className="flex h-full w-[110px] shrink-0 items-center justify-center gap-[2px] border-x border-[#a8a090]">
          <MiniBoard />
          <MiniBoard />
        </div>
        <span className="ml-[4px] whitespace-nowrap text-[12px] text-black">长城证券武汉双线2</span>
        <StatusIcons />
      </div>
      <div className="flex h-[2px] shrink-0">
        <div className="w-[93px] bg-[#3c8d3c]" />
        <div className="flex-1 bg-[#2f64c8]" />
        <div className="w-[112px] bg-[#1296e0]" />
      </div>
    </div>
  );
}
